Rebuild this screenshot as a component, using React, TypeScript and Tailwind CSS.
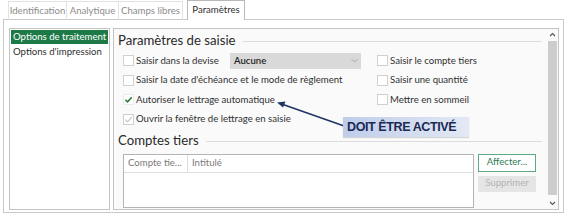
import React from "react";

function Box({ state }: { state?: "on" | "dis" }) {
  if (state === "on") {
    return (
      <span className="w-[11px] h-[11px] border border-[#ececec] bg-white flex items-center justify-center shrink-0">
        <svg width="9" height="9" viewBox="0 0 10 10">
          <path d="M1.5 5.2 L4 7.6 L8.6 2.4" fill="none" stroke="#2f7a38" strokeWidth="1.7" />
        </svg>
      </span>
    );
  }
  if (state === "dis") {
    return (
      <span className="w-[11px] h-[11px] border border-[#cfcfcf] bg-white flex items-center justify-center shrink-0">
        <svg width="9" height="9" viewBox="0 0 10 10">
          <path d="M1.5 5.2 L4 7.6 L8.6 2.4" fill="none" stroke="#bdbdbd" strokeWidth="1.2" />
        </svg>
      </span>
    );
  }
  return <span className="w-[11px] h-[11px] border border-[#d0d0d0] bg-white shrink-0" />;
}

function Check({ label, state }: { label: string; state?: "on" | "dis" }) {
  return (
    <div className="flex items-center gap-[2px] h-[19.5px]">
      <Box state={state} />
      <span className="whitespace-nowrap">{label}</span>
    </div>
  );
}

export default function App() {
  return (
    <div className="w-[570px] h-[220px] bg-white relative overflow-hidden text-[#303030] text-[9.6px] font-['Lato',sans-serif]">
      {/* tabs */}
      <div className="h-[19px] flex items-start pl-[8px] text-[#8c8c8c]">
        <div className="w-[59px] h-[19px] mt-[1px] border-l border-r border-t border-[#e2e2e2] flex items-center justify-center whitespace-nowrap">Identification</div>
        <div className="w-[52px] h-[19px] mt-[1px] border-r border-t border-[#e2e2e2] flex items-center justify-center whitespace-nowrap">Analytique</div>
        <div className="w-[64px] h-[19px] mt-[1px] border-r border-t border-[#e2e2e2] flex items-center justify-center whitespace-nowrap">Champs libres</div>
        <div className="relative z-10 ml-[4px] w-[58px] h-[20px] bg-white border border-b-0 border-[#b8b8b8] flex items-center justify-center text-[#303030] whitespace-nowrap">Paramètres</div>
      </div>
      {/* frame */}
      <div className="ml-[3px] w-[561px] h-[194px] border border-[#c9c9c9] flex pt-[8px] pl-[5px] pr-[4px] pb-[2px] gap-[3px]">
        <div className="w-[101px] border border-[#c4c4c4] bg-white p-[1px] flex flex-col">
          <div className="h-[14px] bg-[#1d7a47] text-white flex items-center pl-[2px] whitespace-nowrap">Options de traitement</div>
          <div className="h-[15px] flex items-center pl-[2px] pt-[2px] whitespace-nowrap">Options d'impression</div>
        </div>
        <div className="flex-1 border border-[#c4c4c4] bg-[#fafafa] flex">
          <div className="flex-1 flex flex-col pl-[4px] pr-[4px]">
            <div className="mt-[2px] h-[20px] flex items-center">
              <span className="text-[13.2px] text-[#2a2a2a] whitespace-nowrap">Paramètres de saisie</span>
              <span className="flex-1 h-px bg-[#dcdcdc] ml-[7px] mt-[1px]" />
            </div>
            <div className="pl-[5px] grid grid-cols-[254px_1fr]">
              <div className="flex items-center h-[19.5px]">
                <div className="w-[107px] flex items-center gap-[2px]">
                  <Box />
                  <span className="whitespace-nowrap">Saisir dans la devise</span>
                </div>
                <div className="w-[131px] h-[16px] bg-[#d9d9d9] flex items-center justify-between pl-[4px] pr-[3px] text-[#1e1e1e]">
                  <span className="font-semibold">Aucune</span>
                  <svg width="7" height="5" viewBox="0 0 7 5">
                    <path d="M0.5 1 L3.5 4 L6.5 1" fill="none" stroke="#a5a5a5" strokeWidth="1" />
                  </svg>
                </div>
              </div>
              <Check label="Saisir le compte tiers" />
              <Check label="Saisir la date d'échéance et le mode de règlement" />
              <Check label="Saisir une quantité" />
              <Check label="Autoriser le lettrage automatique" state="on" />
              <Check label="Mettre en sommeil" />
              <Check label="Ouvrir la fenêtre de lettrage en saisie" state="dis" />
              <div />
            </div>
            <div className="mt-[1.5px] h-[20px] flex items-center">
              <span className="text-[13.2px] text-[#2a2a2a] whitespace-nowrap">Comptes tiers</span>
              <span className="flex-1 h-px bg-[#dcdcdc] ml-[7px] mt-[1px]" />
            </div>
            <div className="mt-[3px] pl-[5px] flex gap-[4px]">
              <div className="w-[351px] h-[54px] border border-[#b4b4b4] bg-white flex flex-col">
                <div className="h-[18px] border-b border-[#dedede] flex text-[#7a7a7a]">
                  <div className="w-[64px] border-r border-[#dedede] flex items-center pl-[4px] whitespace-nowrap">Compte tie...</div>
                  <div className="flex items-center pl-[4px]">Intitulé</div>
                </div>
              </div>
              <div className="flex flex-col gap-[4px]">
                <div className="w-[58px] h-[18px] border border-[#5ea882] bg-white text-[#2f7d56] flex items-center justify-center">Affecter...</div>
                <div className="w-[58px] h-[16px] bg-[#e5e5e5] text-[#b4b4b4] flex items-center justify-center">Supprimer</div>
              </div>
            </div>
          </div>
          {/* scrollbar */}
          <div className="w-[12px] flex flex-col items-center pt-[2px] pb-[2px]">
            <svg width="7" height="8" viewBox="0 0 7 8" className="shrink-0">
              <path d="M1 5 L3.5 2.5 L6 5" fill="none" stroke="#555" strokeWidth="1.1" />
            </svg>
            <div className="w-[9px] flex-1 bg-[#cdcdcd] mt-[2px] mb-[4px]" />
            <svg width="7" height="8" viewBox="0 0 7 8" className="shrink-0">
              <path d="M1 3 L3.5 5.5 L6 3" fill="none" stroke="#555" strokeWidth="1.1" />
            </svg>
          </div>
        </div>
      </div>
      {/* annotation */}
      <svg className="absolute left-0 top-0 pointer-events-none" width="570" height="220">
        <line x1="347" y1="127" x2="283" y2="104.5" stroke="#1f3566" strokeWidth="1.6" />
        <path d="M277 102.5 L285.5 101.5 L283 107.5 Z" fill="#1f3566" />
      </svg>
      <div className="absolute left-[343px] top-[117px] w-[126px] h-[20px] bg-gradient-to-r from-[#bfcdea] to-[#e3e9f4] shadow-[0_1px_1px_rgba(0,0,0,0.15)] flex items-center pl-[4px] font-['Liberation_Sans',sans-serif] font-bold text-[12.5px] tracking-[-0.4px] text-[#1b2955]">
        DOIT ÊTRE ACTIVÉ
      </div>
    </div>
  );
}
